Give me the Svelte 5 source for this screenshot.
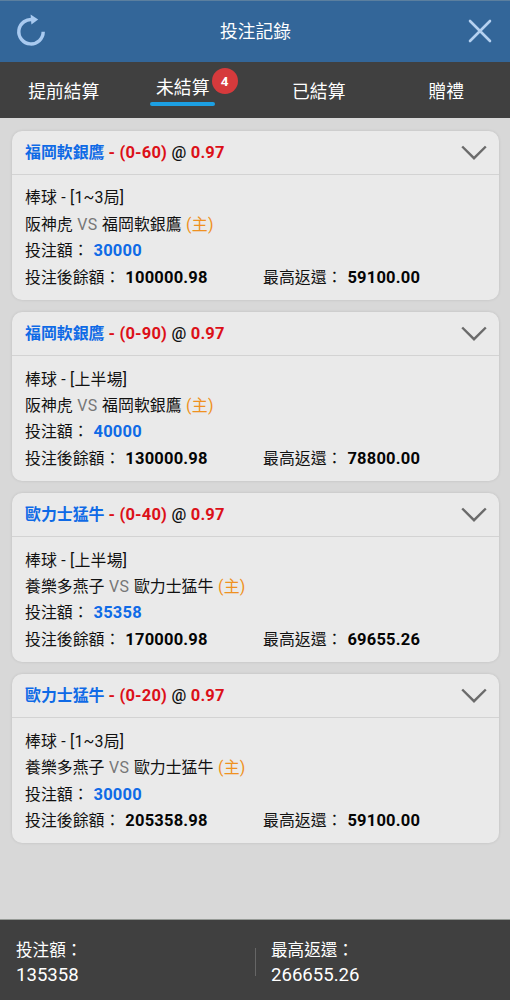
<script>
	const tabs = [
		{ label: '提前結算' },
		{ label: '未結算', count: 4 },
		{ label: '已結算' },
		{ label: '贈禮' }
	];
	let active = $state(1);

	const bets = [
		{ pick: '福岡軟銀鷹', line: '(0-60)', odds: '0.97', period: '[1~3局]', away: '阪神虎', home: '福岡軟銀鷹', stake: '30000', balance: '100000.98', payout: '59100.00' },
		{ pick: '福岡軟銀鷹', line: '(0-90)', odds: '0.97', period: '[上半場]', away: '阪神虎', home: '福岡軟銀鷹', stake: '40000', balance: '130000.98', payout: '78800.00' },
		{ pick: '歐力士猛牛', line: '(0-40)', odds: '0.97', period: '[上半場]', away: '養樂多燕子', home: '歐力士猛牛', stake: '35358', balance: '170000.98', payout: '69655.26' },
		{ pick: '歐力士猛牛', line: '(0-20)', odds: '0.97', period: '[1~3局]', away: '養樂多燕子', home: '歐力士猛牛', stake: '30000', balance: '205358.98', payout: '59100.00' }
	];
</script>

<div class="page">
	<header>
		<button aria-label="refresh">
			<svg width="30" height="34" viewBox="0 0 30 34">
				<path d="M17.5 5.8A12.2 12.2 0 1 0 27.2 17.8" fill="none" stroke="#a9caf0" stroke-width="3.4" />
				<path d="M14.6 .6L22.2 5.4L15.4 10.4Z" fill="#a9caf0" />
			</svg>
		</button>
		<h1>投注記錄</h1>
		<button aria-label="close">
			<svg width="24" height="24" viewBox="0 0 24 24">
				<path d="M2 2L22 22M22 2L2 22" fill="none" stroke="#b5d1f0" stroke-width="2.6" stroke-linecap="round" />
			</svg>
		</button>
	</header>

	<nav>
		{#each tabs as tab, i}
			<button class="tab" class:active={active === i} onclick={() => (active = i)}>
				<span class="label">{tab.label}</span>
				{#if tab.count}<span class="badge">{tab.count}</span>{/if}
			</button>
		{/each}
	</nav>

	<main>
		{#each bets as bet}
			<section class="card">
				<div class="head">
					<div><span class="blue">{bet.pick}</span> <span class="wide"><span class="red">- {bet.line}</span> <span class="at">@</span> <span class="red">{bet.odds}</span></span></div>
					<svg width="26" height="16" viewBox="0 0 26 16">
						<path d="M1.2 1.5L13 13.2L24.8 1.5" fill="none" stroke="#6b6b6b" stroke-width="2.4" />
					</svg>
				</div>
				<div class="body">
					<div class="period">棒球 - {bet.period}</div>
					<div>{bet.away} <span class="vs">VS</span> {bet.home} <span class="host">(主)</span></div>
					<div>投注額： <b class="blue">{bet.stake}</b></div>
					<div class="row">
						<div>投注後餘額： <b>{bet.balance}</b></div>
						<div>最高返還： <b>{bet.payout}</b></div>
					</div>
				</div>
			</section>
		{/each}
	</main>

	<footer>
		<div class="total">
			<div>投注額：</div>
			<div class="num">135358</div>
		</div>
		<div class="total">
			<div>最高返還：</div>
			<div class="num">266655.26</div>
		</div>
	</footer>
</div>

<style>
	:global(body) {
		background: #d8d8d8;
	}
	.page {
		display: flex;
		flex-direction: column;
		height: 1000px;
		overflow: hidden;
		font-family: Roboto, "Noto Sans CJK TC", sans-serif;
		font-size: 15.9px;
		color: #111;
	}
	button {
		all: unset;
		cursor: pointer;
	}
	svg {
		display: block;
	}
	header {
		box-sizing: border-box;
		flex: none;
		height: 62px;
		padding: 0 18px 2px 16px;
		display: flex;
		align-items: center;
		justify-content: space-between;
		background: #336699;
		border-top: 1px solid #5b7f9f;
		color: #fff;
	}
	h1 {
		margin: 0 3px 2px 0;
		font-size: 17.7px;
		font-weight: 400;
	}
	nav {
		flex: none;
		display: grid;
		grid-template-columns: repeat(4, 1fr);
		height: 56px;
		background: #404040;
		color: #fff;
		font-size: 17.8px;
	}
	.tab {
		display: flex;
		align-items: center;
		justify-content: center;
		height: 55px;
	}
	.active {
		position: relative;
		align-items: flex-start;
		padding-right: 17px;
	}
	.active .label {
		margin-top: 13px;
		padding: 0 6px;
		line-height: 26px;
	}
	.active .label::after {
		content: "";
		display: block;
		height: 4px;
		margin: 1px -6px 0;
		border-radius: 2px;
		background: #1ca0e3;
	}
	.badge {
		position: absolute;
		left: 84px;
		top: 6px;
		width: 26px;
		height: 26px;
		border-radius: 50%;
		background: #d63a3c;
		font-size: 13.5px;
		font-weight: 700;
		line-height: 26px;
		text-align: center;
	}
	main {
		flex: 1;
		display: flex;
		flex-direction: column;
		gap: 12.2px;
		padding: 13px 11px 0 12px;
	}
	.card {
		background: #eaeaea;
		border-radius: 10px;
		box-shadow: 0 0 3px rgba(0, 0, 0, 0.12);
	}
	.head {
		box-sizing: border-box;
		height: 44px;
		padding: 0 12px 2px 13px;
		display: flex;
		align-items: center;
		justify-content: space-between;
		border-bottom: 1px solid #d3d3d3;
		font-weight: 700;
	}
	.head svg {
		margin-top: 3px;
	}
	.wide,
	b {
		font-size: 16.5px;
		letter-spacing: 0.2px;
	}
	b {
		margin-left: 1px;
		color: #050505;
	}
	.at {
		font-weight: 500;
	}
	.body {
		padding: 10.4px 13px 9px;
		line-height: 26.4px;
	}
	.body > div {
		height: 26.4px;
	}
	.period {
		letter-spacing: 0.2px;
	}
	.blue {
		color: #0f6ae6;
	}
	.red {
		color: #dc1018;
	}
	.vs {
		color: #777;
		letter-spacing: 0.4px;
		margin: 0 0.6px;
	}
	.host {
		color: #ef9120;
		letter-spacing: 0.3px;
		margin-left: 0.6px;
	}
	.row {
		display: grid;
		grid-template-columns: 238px 1fr;
	}
	footer {
		box-sizing: border-box;
		flex: none;
		height: 81px;
		display: grid;
		grid-template-columns: 1fr 1fr;
		align-items: center;
		padding-top: 5px;
		background: #404040;
		border-top: 1px solid #969a96;
		color: #fff;
		font-size: 16.6px;
		line-height: 25px;
	}
	.total {
		position: relative;
		padding-left: 16px;
	}
	.total + .total::before {
		content: "";
		position: absolute;
		left: 0;
		top: 10px;
		width: 1px;
		height: 28px;
		background: #666;
	}
	.num {
		font-size: 18.6px;
	}
</style>
